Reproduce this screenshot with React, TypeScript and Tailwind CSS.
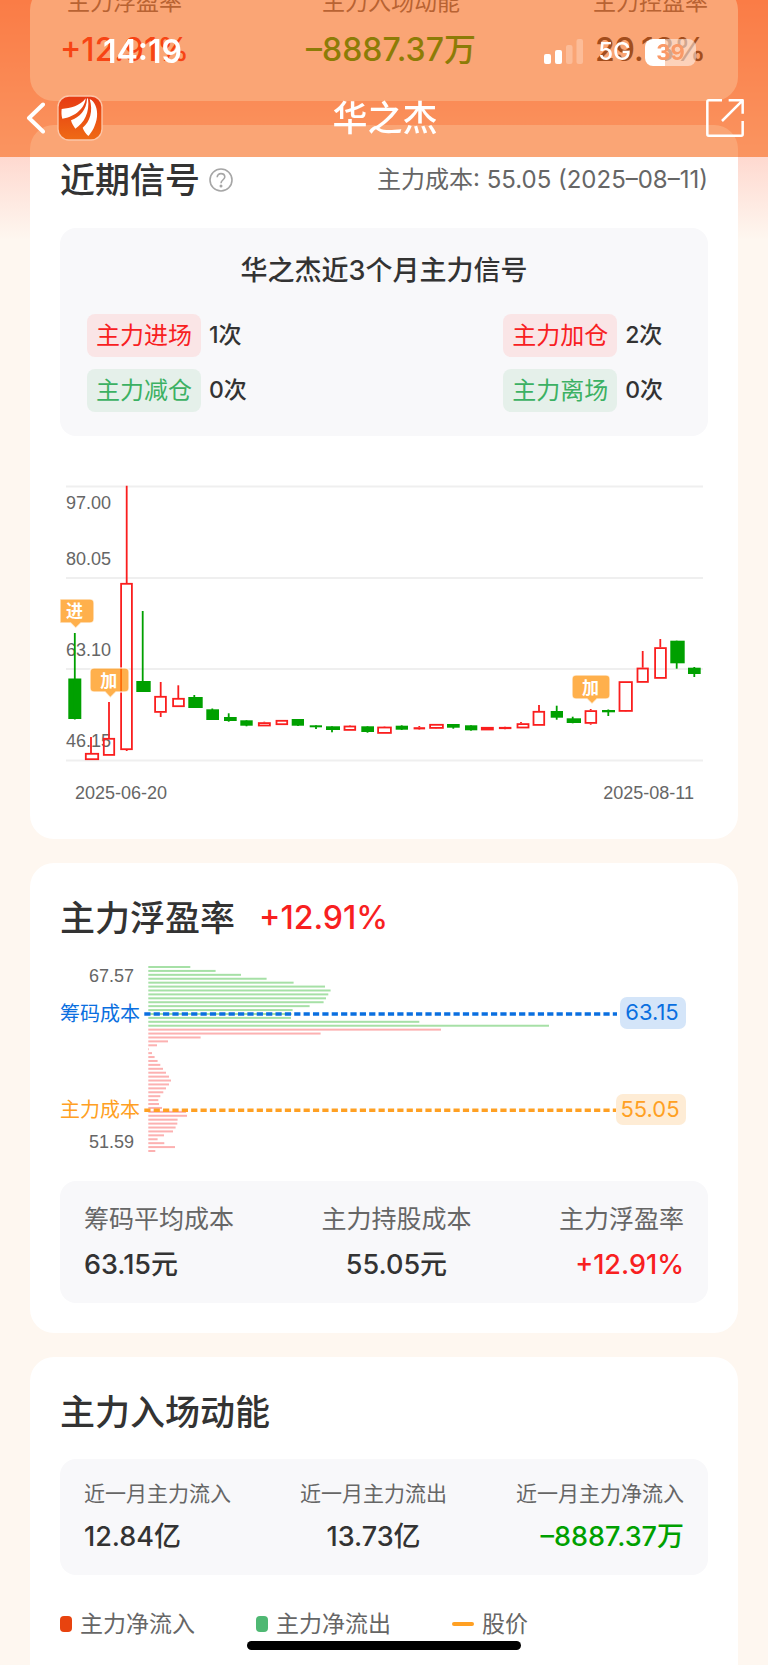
import type { ReactNode } from "react";

const RED = "#fa1e1e";
const GREEN = "#00a000";

/* kind, left, right, open/close top, bottom, wick x, wick top, wick bottom */
type Candle = ["r" | "g", number, number, number, number, number, number, number];

const candles: Candle[] = [
  ["g", 8.3, 21.3, 208.5, 249, 14.8, 163, 249.5],
  ["r", 25, 39, 283, 290, 31, 267, 290],
  ["r", 43, 55, 268, 285.7, 49, 232, 285.7],
  ["r", 60.3, 72.7, 113, 280, 66.7, 15.7, 281],
  ["g", 76.3, 90.7, 211, 222, 82.7, 141, 222],
  ["r", 94.3, 106.7, 226, 242.7, 100.7, 212, 247],
  ["r", 112.3, 124.7, 228, 237, 118.3, 215.3, 237],
  ["g", 128.3, 142.7, 227, 238, 134.3, 225, 238],
  ["g", 146.3, 159, 239.3, 250, 152.3, 238.5, 250],
  ["g", 164, 176.7, 247, 251, 168.7, 243.3, 251.7],
  ["g", 180.3, 192.7, 250.3, 255.7, 186.5, 250.3, 256.3],
  ["r", 198, 210.7, 252.3, 256.3, 204.3, 251.7, 256.3],
  ["r", 215.7, 228, 250, 255, 222, 250, 255],
  ["g", 231.7, 244, 249, 255.7, 238, 249, 256],
  ["g", 249.7, 262, 255.3, 257.3, 256, 255.3, 259],
  ["g", 266, 280, 256.3, 260, 272, 256.3, 262.3],
  ["r", 283.7, 296, 255.7, 260.7, 290, 255.2, 260.7],
  ["g", 301.3, 314, 256.3, 262, 307.5, 256.3, 262.7],
  ["r", 317.3, 331.7, 256.7, 263.7, 324.5, 256.3, 263.7],
  ["g", 335.7, 348, 255.7, 259.7, 341.7, 255.3, 260],
  ["r", 353.7, 365, 257.3, 259.3, 359.3, 256, 259.7],
  ["r", 369.3, 383.7, 254, 258.7, 376, 254, 259],
  ["g", 387, 399.7, 254, 257.7, 393.3, 254, 258.7],
  ["g", 405, 417.3, 255.3, 260.3, 411, 255.3, 260.7],
  ["r", 421, 433.7, 257, 260.3, 427, 257, 260.3],
  ["r", 439, 451.3, 257, 258.7, 445, 256.7, 259.3],
  ["r", 456.7, 469.3, 253.3, 258.3, 461, 252, 258.3],
  ["r", 472.7, 485, 241, 255.7, 479, 235, 255.7],
  ["g", 490.7, 503, 241, 247.7, 496.7, 235.7, 249.7],
  ["g", 506.7, 521, 248.3, 253, 512.7, 246.7, 253.3],
  ["r", 524.7, 537, 240.3, 253.7, 530.7, 239, 254.7],
  ["g", 542, 555, 240, 242.3, 548.3, 239.5, 246],
  ["r", 558.7, 572.7, 211.3, 241.7, 565.7, 211.3, 242],
  ["r", 576.7, 588.7, 197.7, 212.7, 582.7, 181, 212.7],
  ["r", 594.3, 606.7, 177.3, 208.7, 600.3, 169, 208.7],
  ["g", 610.3, 624.7, 170.7, 193.3, 616.7, 170.7, 198.7],
  ["g", 628, 640.7, 197.7, 204, 634.3, 197, 207],
];

const greenBars = [42, 67.3, 92.7, 118.3, 145.3, 176.7, 182.3, 180, 177.7, 175.3, 161.3, 144.3, 143.3, 142.7, 271, 400.7];
const redBars = [
  292.7, 172.3, 52.3, 19.7, 8.7, 0.7, 3.7, 6.3, 9.3, 12, 14.7, 17.7, 20.7, 22.7, 20.7, 17.7, 15, 12, 10, 10.7, 13.7,
  37.7, 38.7, 29.3, 29, 27.3, 24.7, 15.7, 9.3, 16, 26.7, 7,
];

function Marker({ path, x, y, label }: { path: string; x: number; y: number; label: string }) {
  return (
    <g>
      <path d={path} fill="#ff8f00" fillOpacity="0.7" stroke="#fff" strokeOpacity="0.7" strokeWidth="1.5" />
      <text x={x} y={y} textAnchor="middle" className="fill-white text-[17px] font-bold">
        {label}
      </text>
    </g>
  );
}

function CandleChart() {
  return (
    <svg viewBox="0 0 648 350" className="mt-[34px] block w-full" role="img" aria-label="主力信号K线图">
      {[16.5, 108, 199, 290.5].map((y) => (
        <line key={y} x1="6" x2="643" y1={y} y2={y} stroke="#efefef" strokeWidth="1.8" />
      ))}
      <g className="fill-[#666] font-['Liberation_Sans',Arial,sans-serif] text-[18px]">
        <text x="6" y="39">97.00</text>
        <text x="6" y="95">80.05</text>
        <text x="6" y="186">63.10</text>
        <text x="6" y="277">46.15</text>
        <text x="15" y="329">2025-06-20</text>
        <text x="634" y="329" textAnchor="end">2025-08-11</text>
      </g>
      {candles.map(([kind, l, r, t, b, wx, wt, wb]) =>
        kind === "g" ? (
          <g key={l} fill={GREEN}>
            <rect x={l} y={t} width={r - l} height={b - t} />
            <rect x={wx - 0.9} y={wt} width="1.8" height={wb - wt} />
          </g>
        ) : (
          <g key={l} stroke={RED} strokeWidth="1.8" fill="none">
            <rect x={l + 0.8} y={t + 0.8} width={r - l - 1.6} height={Math.max(b - t - 1.6, 0.4)} />
            <path d={`M${wx} ${wt}V${t}M${wx} ${b}V${wb}`} />
          </g>
        ),
      )}
      <Marker path="M0 129H30Q34 129 34 133V149Q34 153 30 153H21L15.7 158.3L10.5 153H0Z" x={14.5} y={147} label="进" />
      <Marker
        path="M34 198H65Q69 198 69 202V218Q69 222 65 222H56L50.3 227.7L45 222H34Q30 222 30 218V202Q30 198 34 198Z"
        x={48.7}
        y={217}
        label="加"
      />
      <Marker
        path="M516 205H546Q550 205 550 209V225Q550 229 546 229H537L532 234L527 229H516Q512 229 512 225V209Q512 205 516 205Z"
        x={530.5}
        y={224}
        label="加"
      />
    </svg>
  );
}

function CostChart() {
  return (
    <svg viewBox="0 0 648 200" className="mt-[17px] block w-full" role="img" aria-label="筹码分布图">
      {[...greenBars, ...redBars].map((w, i) => (
        <rect
          key={i}
          x="88.3"
          y={6 + i * 3.915}
          width={w}
          height="2"
          fill={i < greenBars.length ? "#a6e0a6" : "#fcb1b1"}
        />
      ))}
      <g className="fill-[#666] font-['Liberation_Sans',Arial,sans-serif] text-[18px]">
        <text x="74" y="22" textAnchor="end">67.57</text>
        <text x="74" y="188" textAnchor="end">51.59</text>
      </g>
      <text x="0" y="61" className="fill-[#0a6fe0] text-[20px]">筹码成本</text>
      <text x="0" y="157" className="fill-[#ffa023] text-[20px]">主力成本</text>
      <line x1="84.3" x2="557" y1="54" y2="54" stroke="#0a6fe0" strokeWidth="3.6" strokeDasharray="6.2 3.17" />
      <line x1="84.3" x2="556" y1="150.3" y2="150.3" stroke="#ffa023" strokeWidth="3.6" strokeDasharray="6.2 3.17" />
      <rect x="560" y="37" width="66" height="32" rx="7" fill="#d4e5f9" />
      <rect x="556" y="134" width="70" height="31" rx="7" fill="#feecd5" />
      <text x="592" y="60" textAnchor="middle" className="fill-[#0a6fe0] text-[22px]">63.15</text>
      <text x="590" y="157" textAnchor="middle" className="fill-[#ffa023] text-[22px]">55.05</text>
    </svg>
  );
}

function Card({ children, className = "" }: { children: ReactNode; className?: string }) {
  return <section className={`mx-[30px] rounded-3xl bg-white px-[30px] ${className}`}>{children}</section>;
}

function Title({ children }: { children: ReactNode }) {
  return <h2 className="text-[35px] leading-[50px] font-medium text-[#333]">{children}</h2>;
}

function SignalCount({ tone, label, count }: { tone: string; label: string; count: string }) {
  return (
    <div className="flex h-[43px] items-center gap-2">
      <span className={`flex h-full items-center rounded-lg px-[9px] text-2xl ${tone}`}>{label}</span>
      <span className="text-[23px] font-medium text-[#333]">{count}</span>
    </div>
  );
}

type StatItem = { label: string; value: string; align: string; color: string };

function Stats({ items, labelClass, className }: { items: StatItem[]; labelClass: string; className: string }) {
  return (
    <dl className={`flex justify-between rounded-2xl bg-[#f8f8fa] px-6 py-5 ${className}`}>
      {items.map((s) => (
        <div key={s.label} className={`flex flex-col gap-[10px] ${s.align}`}>
          <dt className={`text-[#666] ${labelClass}`}>{s.label}</dt>
          <dd className={`text-[27px] leading-9 font-medium ${s.color}`}>{s.value}</dd>
        </div>
      ))}
    </dl>
  );
}

function Header() {
  return (
    <header className="fixed inset-x-0 top-0 z-10 bg-[rgba(247,97,13,0.57)] pt-8 text-white">
      <div className="mb-[7px] flex h-10 items-center justify-between pr-[72px] pl-[103px]">
        <span className="text-[32px] font-semibold">14:19</span>
        <div className="flex items-center gap-[14px]">
          <svg width="40" height="26" viewBox="0 0 40 26" fill="#fff" aria-hidden="true">
            <rect x="0" y="15" width="7" height="10" rx="2" />
            <rect x="11" y="11" width="7" height="14" rx="2" />
            <rect x="22" y="6" width="6.5" height="19" rx="2" opacity="0.25" />
            <rect x="32.5" y="0" width="6.5" height="25" rx="2" opacity="0.25" />
          </svg>
          <span className="text-2xl font-medium">5G</span>
          <div className="flex h-[27px] w-[51px] items-center justify-center rounded-lg bg-linear-to-r from-white from-39% to-white/50 to-39% text-[22px] font-bold text-[#fa9a68]">
            39
          </div>
        </div>
      </div>
      <div className="grid h-[78px] grid-cols-[1fr_auto_1fr] items-center pr-6 pl-[26px]">
        <div className="flex items-center gap-3">
          <button type="button" aria-label="返回">
            <svg width="19" height="32" viewBox="0 0 19 32" fill="none" stroke="#fff" strokeWidth="4" strokeLinecap="round" strokeLinejoin="round">
              <path d="M17 2.5L3 16L17 29.5" />
            </svg>
          </button>
          <svg width="46" height="46" viewBox="-3 -3 138 138" aria-hidden="true">
            <defs>
              <linearGradient id="logo" x1="0" y1="0" x2="0" y2="1">
                <stop offset="0" stopColor="#e63a14" />
                <stop offset="1" stopColor="#ef6a14" />
              </linearGradient>
            </defs>
            <rect width="132" height="132" rx="33" fill="url(#logo)" stroke="#fcc6a8" strokeWidth="4" />
            <g fill="#fff">
              <path d="M11 39C38 37 66 30 83 7C82 34 52 64 13 68C10 58 10 48 11 39Z" />
              <path d="M90 7C96 50 78 82 52 98C46 90 41 82 39 73C64 64 86 42 87 8Z" />
              <path d="M95 9C110 14 120 40 117 62C114 88 102 108 91 120C84 114 77 104 74 95C96 78 106 45 95 9Z" />
            </g>
          </svg>
        </div>
        <h1 className="text-[35px] font-medium">华之杰</h1>
        <button type="button" aria-label="分享" className="justify-self-end">
          <svg width="38" height="38" viewBox="0 0 114 114" fill="none" stroke="#fff" strokeWidth="7.5" strokeLinejoin="round">
            <path d="M48 4H8Q4 4 4 8V106Q4 110 8 110H106Q110 110 110 106V66" />
            <path d="M68 4H110V44M110 4L48 66" />
          </svg>
        </button>
      </div>
    </header>
  );
}

const summary = [
  { label: "主力浮盈率", value: "+12.91%", color: "text-[#f8201f]" },
  { label: "主力入场动能", value: "–8887.37万", color: "text-[#00a000]" },
  { label: "主力控盘率", value: "29.13%", color: "text-[#333]" },
];

export default function App() {
  return (
    <div className="flex min-h-screen flex-col bg-[#fef7f0] font-[Inter,'Noto_Sans_CJK_SC',sans-serif]">
      <Header />
      <main className="flex flex-1 flex-col gap-6 overflow-hidden bg-[linear-gradient(#ffa092,#fef7f0_240px)]">
        <Card className="-mt-[14px] flex justify-between pb-[30px]">
          {summary.map((s) => (
            <div key={s.label} className="flex flex-col items-center gap-[11px]">
              <span className="text-[23px] leading-8 text-[#666]">{s.label}</span>
              <span className={`text-[32px] leading-[42px] font-medium ${s.color}`}>{s.value}</span>
            </div>
          ))}
        </Card>

        <Card className="pt-[30px] pb-[19px]">
          <div className="flex items-center justify-between">
            <div className="flex items-center gap-[9px]">
              <Title>近期信号</Title>
              <button type="button" aria-label="说明">
                <svg width="24" height="24" viewBox="0 0 24 24" fill="none" stroke="#a6a6a6" strokeWidth="1.6">
                  <circle cx="12" cy="12" r="11" />
                  <path d="M8.2 9.3C8.2 7 9.8 5.6 12 5.6S15.8 7 15.8 9.1C15.8 11.7 12 11.9 12 15.2" />
                  <circle cx="12" cy="18" r="0.7" fill="#a6a6a6" />
                </svg>
              </button>
            </div>
            <p className="text-2xl text-[#666]">主力成本: 55.05 (2025–08–11)</p>
          </div>
          <div className="mt-[23px] rounded-2xl bg-[#f8f8fa] pt-[25px] pb-6">
            <h3 className="text-center text-[27px] leading-9 font-medium text-[#333]">华之杰近3个月主力信号</h3>
            <div className="mt-[25px] flex justify-between pr-[45px] pl-[27px]">
              <div className="flex flex-col gap-3">
                <SignalCount tone="bg-[#fae5e6] text-[#f8201f]" label="主力进场" count="1次" />
                <SignalCount tone="bg-[#e5f0ea] text-[#3cb163]" label="主力减仓" count="0次" />
              </div>
              <div className="flex flex-col gap-3">
                <SignalCount tone="bg-[#fae5e6] text-[#f8201f]" label="主力加仓" count="2次" />
                <SignalCount tone="bg-[#e5f0ea] text-[#3cb163]" label="主力离场" count="0次" />
              </div>
            </div>
          </div>
          <CandleChart />
        </Card>

        <Card className="py-[30px]">
          <div className="flex items-center gap-6">
            <Title>主力浮盈率</Title>
            <span className="text-[32px] leading-[48px] font-medium text-[#f8201f]">+12.91%</span>
          </div>
          <CostChart />
          <Stats
            className="mt-[21px]"
            labelClass="text-[25px] leading-9"
            items={[
              { label: "筹码平均成本", value: "63.15元", align: "items-start", color: "text-[#333]" },
              { label: "主力持股成本", value: "55.05元", align: "items-center", color: "text-[#333]" },
              { label: "主力浮盈率", value: "+12.91%", align: "items-end", color: "text-[#f8201f]" },
            ]}
          />
        </Card>

        <Card className="flex-1 rounded-b-none pt-[30px]">
          <Title>主力入场动能</Title>
          <Stats
            className="mt-[22px]"
            labelClass="text-[21px] leading-[30px]"
            items={[
              { label: "近一月主力流入", value: "12.84亿", align: "items-start", color: "text-[#333]" },
              { label: "近一月主力流出", value: "13.73亿", align: "items-center", color: "text-[#333]" },
              { label: "近一月主力净流入", value: "–8887.37万", align: "items-end", color: "text-[#00a000]" },
            ]}
          />
          <ul className="mt-[31px] flex gap-[61px] text-[23px] leading-9 text-[#666]">
            <li className="flex items-center gap-2">
              <span className="h-4 w-3 rounded bg-[#e8430f]" />
              主力净流入
            </li>
            <li className="flex items-center gap-2">
              <span className="h-4 w-3 rounded bg-[#4fb873]" />
              主力净流出
            </li>
            <li className="flex items-center gap-2">
              <span className="h-1 w-[22px] rounded-sm bg-[#ffa023]" />
              股价
            </li>
          </ul>
        </Card>
      </main>
      <div className="fixed bottom-[15px] left-1/2 h-[9px] w-[274px] -translate-x-1/2 rounded-full bg-black" />
    </div>
  );
}
